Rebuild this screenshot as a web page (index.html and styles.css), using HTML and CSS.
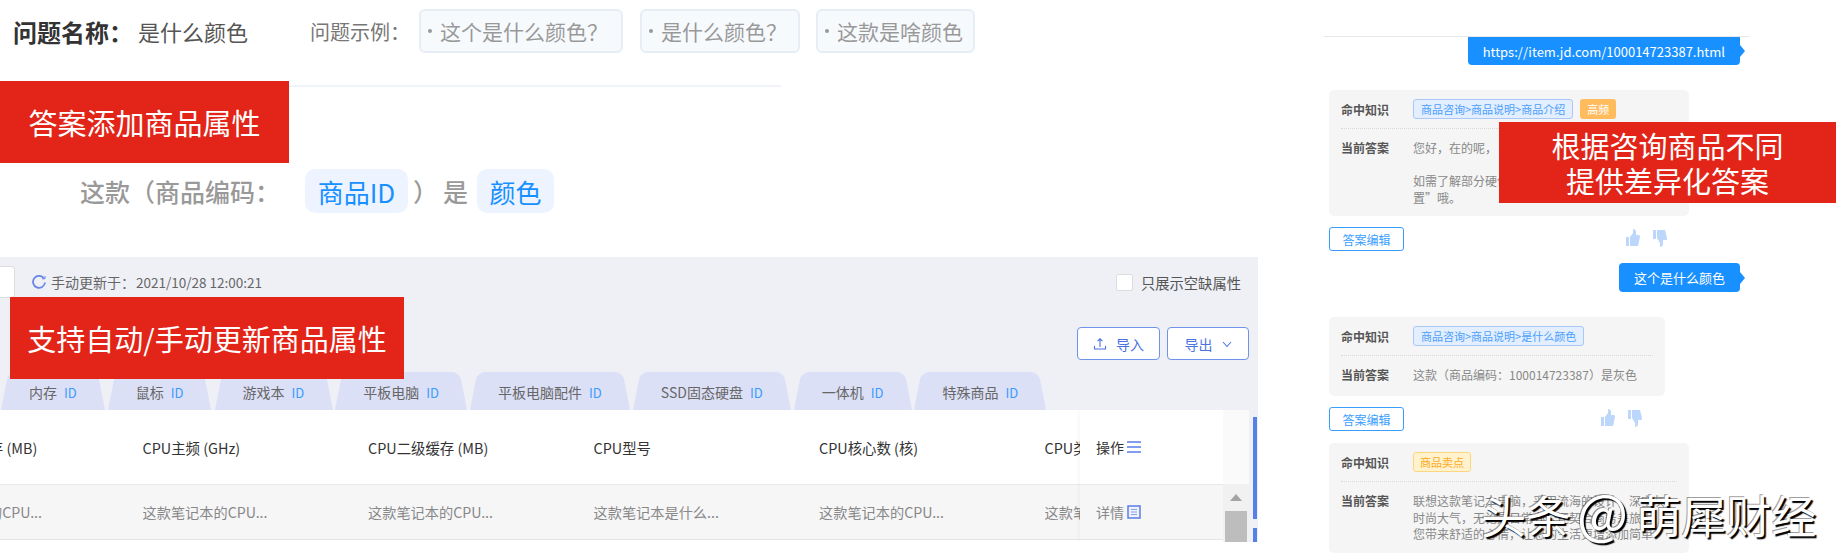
FILE: index.html
```html
<!DOCTYPE html>
<html lang="zh-CN">
<head>
    <meta charset="UTF-8">
    <title>商品属性答案</title>
    <link rel="stylesheet" href="styles.css">
</head>
<body>
<div class="page">

    <!-- Left column -->
    <div class="left">
        <div class="question">
            <span class="q-label">问题名称：</span>
            <span class="q-name">是什么颜色</span>
            <span class="q-example">问题示例：</span>
            <span class="chip chip-one">这个是什么颜色？</span>
            <span class="chip chip-two">是什么颜色？</span>
            <span class="chip chip-three">这款是啥颜色</span>
        </div>
        <div class="q-line"></div>

        <div class="answer">
            <span>这款（商品编码：</span>
            <span class="var var-id">商品ID</span>
            <span class="paren">）</span>
            <span>是</span>
            <span class="var var-color">颜色</span>
        </div>

        <!-- Attribute table panel -->
        <div class="panel">
            <div class="panel-top">
                <div class="stub"></div>
                <svg class="refresh" viewBox="0 0 14 14" width="14" height="14"><path d="M11.800 3.200A6 6 0 1 0 13 7.500" fill="none" stroke="#6a86e8" stroke-width="1.800"/><path d="M10 3.800h3V1" fill="none" stroke="#6a86e8" stroke-width="1"/></svg>
                <span class="updated">手动更新于：<span class="stamp">2021/10/28 12:00:21</span></span>
                <label class="only-empty"><span class="checkbox"></span>只展示空缺属性</label>
            </div>
            <div class="actions">
                <button class="btn btn-import">
                    <svg viewBox="0 0 14 14" width="14" height="14"><path d="M7 10V2M4.600 4.200 7 1.800l2.400 2.400M1.500 9v3h11V9" fill="none" stroke="#4a73e0" stroke-width="1.100"/></svg>
                    导入
                </button>
                <button class="btn btn-export">
                    导出
                    <svg viewBox="0 0 10 10" width="10" height="10"><path d="M1 3l4 4.500L9 3" fill="none" stroke="#4a73e0" stroke-width="1.100"/></svg>
                </button>
            </div>
            <div class="tabs">
                <div class="tab">内存<i>ID</i></div>
                <div class="tab">鼠标<i>ID</i></div>
                <div class="tab">游戏本<i>ID</i></div>
                <div class="tab">平板电脑<i>ID</i></div>
                <div class="tab">平板电脑配件<i>ID</i></div>
                <div class="tab">SSD固态硬盘<i>ID</i></div>
                <div class="tab">一体机<i>ID</i></div>
                <div class="tab">特殊商品<i>ID</i></div>
            </div>
            <div class="table-wrap">
                <div class="table">
                    <div class="row head">
                        <div>CPU三级缓存 (MB)</div>
                        <div>CPU主频 (GHz)</div>
                        <div>CPU二级缓存 (MB)</div>
                        <div>CPU型号</div>
                        <div>CPU核心数 (核)</div>
                        <div>CPU类型</div>
                    </div>
                    <div class="row body">
                        <div>这款笔记本的CPU...</div>
                        <div>这款笔记本的CPU...</div>
                        <div>这款笔记本的CPU...</div>
                        <div>这款笔记本是什么...</div>
                        <div>这款笔记本的CPU...</div>
                        <div>这款笔记本的CPU...</div>
                    </div>
                </div>
                <div class="fixed-col">
                    <div class="fixed-head">操作
                        <svg viewBox="0 0 14 14" width="14" height="14"><path d="M0 2h14M0 7h14M0 12h14" stroke="#5a7ee8" stroke-width="1.500"/></svg>
                    </div>
                    <div class="fixed-body">详情
                        <svg viewBox="0 0 14 14" width="14" height="14"><path d="M1 1h12v12H1z" fill="#eef1fb" stroke="#5a7ee8" stroke-width="1.500"/><path d="M4 4.500h6M4 7h6M4 9.500h6" stroke="#8aa4ec"/></svg>
                    </div>
                </div>
                <div class="scrollbar">
                    <div class="scroll-corner"></div>
                    <div class="scroll-up"></div>
                    <div class="scroll-thumb"></div>
                </div>
            </div>
            <div class="side-bar"></div>
            <div class="side-bar side-bar-low"></div>
        </div>
    </div>

    <!-- Right column -->
    <div class="right">
        <div class="r-line"></div>
        <div class="bubble-row bubble-first"><div class="bubble">https://item.jd.com/100014723387.html</div></div>

        <div class="card card-first">
            <div class="card-row hit">
                <b>命中知识</b>
                <span class="tag">商品咨询&gt;商品说明&gt;商品介绍</span>
                <span class="tag-hot">高频</span>
            </div>
            <div class="card-row reply">
                <b>当前答案</b>
                <p>您好，在的呢，<br><br>如需了解部分硬件配置<br>置”哦。</p>
            </div>
        </div>
        <div class="card-foot foot-wide">
            <button class="edit">答案编辑</button>
            <span class="votes">
                <svg viewBox="0 0 14 18" width="14" height="18"><path d="M0 8h3v9H0zM4 8l3-4V0c2 0 3 1.500 3 3v3h3.500L14 8l-2 9H4z" fill="#bcd7fb"/></svg>
                <svg viewBox="0 0 14 18" width="14" height="18"><path d="M0 1h3v9H0zM4 1h8l2 8-.5 2H10v4c0 1.500-1 3-3 3v-4l-3-5z" fill="#bcd7fb"/></svg>
            </span>
        </div>

        <div class="bubble-row bubble-second"><div class="bubble">这个是什么颜色</div></div>

        <div class="card card-short">
            <div class="card-row hit">
                <b>命中知识</b>
                <span class="tag">商品咨询&gt;商品说明&gt;是什么颜色</span>
            </div>
            <div class="card-row reply">
                <b>当前答案</b>
                <p>这款（商品编码：100014723387）是灰色</p>
            </div>
        </div>
        <div class="card-foot foot-short">
            <button class="edit">答案编辑</button>
            <span class="votes">
                <svg viewBox="0 0 14 18" width="14" height="18"><path d="M0 8h3v9H0zM4 8l3-4V0c2 0 3 1.500 3 3v3h3.500L14 8l-2 9H4z" fill="#bcd7fb"/></svg>
                <svg viewBox="0 0 14 18" width="14" height="18"><path d="M0 1h3v9H0zM4 1h8l2 8-.5 2H10v4c0 1.500-1 3-3 3v-4l-3-5z" fill="#bcd7fb"/></svg>
            </span>
        </div>

        <div class="card card-last">
            <div class="card-row hit">
                <b>命中知识</b>
                <span class="tag tag-yellow">商品卖点</span>
            </div>
            <div class="card-row reply">
                <b>当前答案</b>
                <p>联想这款笔记本电脑，采用流海的设计，深空灰<br>时尚大气，无论是日常办公还契合商务差旅生<br>您带来舒适的心情，让您的生活更增添加简单</p>
            </div>
        </div>
    </div>

    <!-- Labels laid over the screenshot -->
    <div class="label label-answer">答案添加商品属性</div>
    <div class="label label-update">支持自动/手动更新商品属性</div>
    <div class="label label-diff">根据咨询商品不同<br>提供差异化答案</div>
    <div class="watermark">头条 <span class="wm-at">@</span>萌犀财经</div>
</div>
</body>
</html>
```

FILE: styles.css
```css
* {
    box-sizing: border-box;
}

html, body {
    margin: 0;
    padding: 0;
    background-color: #fff;
}

body {
    font-family: "Noto Sans CJK SC", "Noto Sans", sans-serif;
    color: #333;
}

.page {
    position: relative;
    display: flex;
    width: 1836px;
    height: 557px;
    overflow: hidden;
}

.left {
    width: 1258px;
    padding-top: 9px;
}

/* Question header */
.question {
    display: flex;
    align-items: center;
    height: 44px;
    padding-left: 13px;
    white-space: nowrap;
}

.q-label {
    width: 125px;
    font-size: 24px;
    font-weight: 700;
    color: #333;
}

.q-name {
    width: 172px;
    font-size: 22px;
    color: #555;
}

.q-example {
    width: 109px;
    font-size: 20px;
    color: #777;
}

.chip {
    display: flex;
    align-items: center;
    height: 44px;
    padding-left: 7px;
    font-size: 21px;
    color: #999;
    background-color: #f7fafd;
    border: 2px solid #e6edf5;
    border-radius: 6px;
}

.chip::before {
    content: "";
    width: 4px;
    height: 4px;
    margin-right: 8px;
    background-color: #999;
    border-radius: 50%;
}

.chip-one {
    width: 204px;
    margin-right: 17px;
}

.chip-two {
    width: 160px;
    margin-right: 16px;
}

.chip-three {
    width: 159px;
}

.q-line {
    width: 781px;
    height: 2px;
    margin-top: 32px;
    background-color: #f0f3fa;
}

.answer {
    display: flex;
    align-items: center;
    height: 44px;
    margin-top: 82px;
    padding-left: 80px;
    font-size: 25px;
    font-weight: 500;
    color: #999;
}

.var {
    display: flex;
    align-items: center;
    justify-content: center;
    height: 44px;
    font-size: 26px;
    font-weight: 400;
    color: #1890ff;
    background-color: #edf4ff;
    border-radius: 10px;
}

.var-id {
    width: 103px;
    margin-left: 25px;
}

.paren {
    width: 30px;
    margin-left: 5px;
}

.var-color {
    width: 77px;
    margin-left: 9px;
}

/* Table panel */
.panel {
    position: relative;
    height: 285px;
    margin-top: 44px;
    background-color: #eff0f6;
}

.panel-top {
    display: flex;
    align-items: center;
    height: 32px;
    position: relative;
    top: 9px;
    font-size: 14px;
    color: #666;
}

.stub {
    width: 15px;
    height: 32px;
    margin-right: 17px;
    background-color: #fff;
    border: 1px solid #ddd;
    border-left: none;
    border-radius: 0 4px 4px 0;
}

.updated {
    margin-left: 5px;
}

.stamp {
    margin-left: 1px;
    font-size: 13.500px;
}

.only-empty {
    display: flex;
    align-items: center;
    margin-left: auto;
    margin-right: 17px;
    font-size: 14.300px;
    color: #555;
}

.checkbox {
    width: 17px;
    height: 17px;
    margin-right: 8px;
    background-color: #fff;
    border: 1px solid #ddd;
    border-radius: 2px;
}

.actions {
    display: flex;
    justify-content: flex-end;
    gap: 7px;
    padding-right: 9px;
    margin-top: 38px;
}

.btn {
    display: flex;
    align-items: center;
    justify-content: center;
    gap: 9px;
    height: 33px;
    padding: 0;
    font-family: inherit;
    font-size: 14px;
    color: #4a73e0;
    background-color: #fff;
    border: 1px solid #6f92ea;
    border-radius: 4px;
}

.btn-import {
    width: 83px;
}

.btn-export {
    width: 82px;
}

.tabs {
    display: flex;
    gap: 3px;
    height: 38px;
    margin-top: 12px;
    padding-left: 1px;
}

.tab {
    position: relative;
    z-index: 0;
    display: flex;
    align-items: center;
    padding: 2px 28px 0;
    font-size: 14px;
    color: #666;
    white-space: nowrap;
}

.tab::before,
.tab::after {
    content: "";
    position: absolute;
    z-index: -1;
    top: 0;
    bottom: 0;
    width: 55%;
    background-color: #dce0f7;
}

.tab::before {
    left: 0;
    border-radius: 8px 0 0 0;
    transform: skewX(-11deg);
    transform-origin: left bottom;
}

.tab::after {
    right: 0;
    border-radius: 0 8px 0 0;
    transform: skewX(11deg);
    transform-origin: right bottom;
}

.tab i {
    margin-left: 7px;
    font-style: normal;
    font-size: 13px;
    color: #3a9bff;
}

.table-wrap {
    position: relative;
    width: 1249px;
    height: 132px;
    overflow: hidden;
    background-color: #fff;
}

.table {
    margin-left: -83px;
}

.row {
    display: flex;
    white-space: nowrap;
}

.row > div {
    flex: none;
    width: 225.500px;
    overflow: hidden;
}

.head {
    align-items: center;
    height: 74px;
    font-size: 14.400px;
    color: #333;
}

.body {
    align-items: center;
    height: 56px;
    font-size: 14.200px;
    color: #888;
    background-color: #f6f6f7;
    border-top: 1px solid #e8e8e8;
    border-bottom: 1px solid #e4e4e4;
}

.fixed-col {
    position: absolute;
    top: 0;
    left: 1080px;
    width: 143px;
    height: 132px;
    font-size: 14px;
    background-color: #fff;
    box-shadow: -2px 0 4px rgba(0, 0, 0, 0.03);
}

.fixed-head,
.fixed-body {
    display: flex;
    align-items: center;
    gap: 3px;
    padding-left: 16px;
}

.fixed-head {
    height: 74px;
    color: #333;
}

.fixed-body {
    height: 56px;
    color: #888;
    background-color: #f6f6f7;
    border-top: 1px solid #e8e8e8;
    border-bottom: 1px solid #e4e4e4;
}

.scrollbar {
    position: absolute;
    top: 0;
    left: 1223px;
    width: 26px;
    height: 132px;
    background-color: #f1f1f1;
}

.scroll-corner {
    height: 74px;
    background-color: #fafafa;
}

.scroll-up {
    width: 0;
    height: 0;
    margin: 10px auto 0;
    border-left: 6px solid transparent;
    border-right: 6px solid transparent;
    border-bottom: 7px solid #a3a3a3;
}

.scroll-thumb {
    width: 22px;
    height: 31px;
    margin: 10px auto 0;
    background-color: #bdbdbd;
}

.side-bar {
    position: absolute;
    top: 160px;
    left: 1253px;
    width: 4px;
    height: 102px;
    background-color: #5580ea;
}

.side-bar-low {
    top: 271px;
    height: 14px;
}

/* Chat column */
.right {
    flex: none;
    width: 578px;
    padding-top: 36px;
    font-size: 12px;
}

.r-line {
    width: 426px;
    height: 1px;
    margin-left: 66px;
    background-color: #e8e8e8;
}

.bubble-row {
    display: flex;
    justify-content: flex-end;
    width: 482px;
}

.bubble-second {
    margin-top: 12px;
}

.bubble {
    position: relative;
    display: flex;
    align-items: center;
    padding: 0 15px;
    height: 28px;
    font-size: 13px;
    color: #fff;
    background-color: #1890ff;
    border-radius: 0 0 4px 4px;
}

.bubble-second .bubble {
    height: 29px;
    border-radius: 4px;
}

.bubble::after {
    content: "";
    position: absolute;
    top: 50%;
    right: -5px;
    margin-top: -6px;
    border-top: 6px solid transparent;
    border-bottom: 6px solid transparent;
    border-left: 5px solid #1890ff;
}

.card {
    margin-left: 71px;
    padding: 0 12px;
    background-color: #f5f5f5;
    border-radius: 5px;
}

.card-first {
    width: 360px;
    height: 126px;
    margin-top: 25px;
}

.card-short {
    width: 336px;
    height: 79px;
    margin-top: 25px;
}

.card-last {
    width: 360px;
    height: 110px;
    margin-top: 12px;
}

.card-row {
    display: flex;
    align-items: flex-start;
}

.card-row b {
    flex: none;
    width: 72px;
    font-weight: 700;
    color: #555;
}

.hit {
    align-items: center;
    height: 39px;
    border-bottom: 1px dotted #d9d9d9;
}

.reply {
    padding-top: 11px;
    line-height: 16.500px;
}

.reply p {
    margin: 0;
    color: #888;
    white-space: nowrap;
}

.tag {
    height: 20px;
    padding: 0 7px;
    font-size: 11px;
    line-height: 18px;
    color: #4aa0fc;
    background-color: #e3eeff;
    border: 1px solid #a9c8f7;
    border-radius: 3px;
    white-space: nowrap;
}

.tag-yellow {
    padding: 0 6px;
    color: #fcaa20;
    background-color: #fff2cc;
    border-color: #fcd680;
}

.tag-hot {
    width: 36px;
    height: 20px;
    margin-left: 7px;
    font-size: 11px;
    line-height: 20px;
    text-align: center;
    color: #fff;
    background-color: #ffbb5c;
    border-radius: 3px;
}

.card-foot {
    display: flex;
    align-items: flex-start;
    height: 24px;
    margin-top: 11px;
    margin-left: 71px;
}

.foot-wide {
    width: 338px;
}

.foot-short {
    width: 313px;
}

.edit {
    width: 75px;
    height: 24px;
    padding: 0;
    font-family: inherit;
    font-size: 12px;
    color: #3a9eff;
    background-color: #fff;
    border: 1px solid #3a9eff;
    border-radius: 3px;
}

.votes {
    display: flex;
    gap: 13px;
    margin-left: auto;
    margin-top: 2px;
}

/* Overlays */
.label {
    position: absolute;
    display: flex;
    align-items: center;
    justify-content: center;
    text-align: center;
    font-size: 29px;
    line-height: 35px;
    color: #fff;
    background-color: #e22518;
}

.label-answer {
    top: 81px;
    left: 0;
    width: 289px;
    height: 82px;
}

.label-update {
    top: 297px;
    left: 10px;
    width: 394px;
    height: 82px;
}

.label-diff {
    top: 122px;
    left: 1499px;
    width: 337px;
    height: 81px;
}

.watermark {
    position: absolute;
    top: 484px;
    left: 1481px;
    height: 56px;
    font-size: 45px;
    line-height: 56px;
    word-spacing: -4px;
    color: #fff;
    white-space: nowrap;
    text-shadow: 2px 2px 1px #000, -1px -1px 0 rgba(0, 0, 0, 0.4);
}

.wm-at {
    margin-right: 8px;
    font-size: 54px;
    line-height: 1;
}
```
